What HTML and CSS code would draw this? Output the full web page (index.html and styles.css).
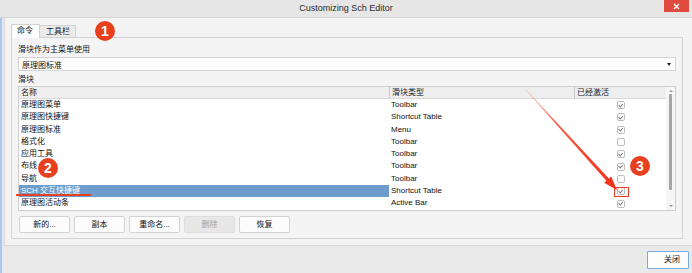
FILE: index.html
```html
<!DOCTYPE html>
<html lang="zh">
<head>
<meta charset="utf-8">
<title>Customizing Sch Editor</title>
<link rel="stylesheet" href="styles.css">
</head>
<body>
<div class="window">
  <div class="titlebar">
    <span></span>
    <span class="title">Customizing Sch Editor</span>
    <span class="close"><svg width="7" height="7" viewBox="0 0 7 7"><path d="M1 1L6 6M6 1L1 6" stroke="#fff" stroke-width="1.4"/></svg></span>
  </div>
  <div class="content">
    <div class="main">
      <div class="tabs">
        <div class="tab active">命令</div>
        <div class="tab">工具栏</div>
      </div>
      <div class="panel">
        <div class="label">滑块作为主菜单使用</div>
        <div class="select"><span>原理图标准</span><span class="arrow"></span></div>
        <div class="label label2">滑块</div>
        <div class="table">
          <div class="grid">
            <div class="th">名称</div><div class="th sep">滑块类型</div><div class="th sep">已经激活</div>

            <div class="td">原理图菜单</div><div class="td type">Toolbar</div><div class="td chk"><span class="cb on"></span></div>
            <div class="td">原理图快捷键</div><div class="td type">Shortcut Table</div><div class="td chk"><span class="cb on"></span></div>
            <div class="td">原理图标准</div><div class="td type">Menu</div><div class="td chk"><span class="cb on"></span></div>
            <div class="td">格式化</div><div class="td type">Toolbar</div><div class="td chk"><span class="cb"></span></div>
            <div class="td">应用工具</div><div class="td type">Toolbar</div><div class="td chk"><span class="cb on"></span></div>
            <div class="td">布线</div><div class="td type">Toolbar</div><div class="td chk"><span class="cb on"></span></div>
            <div class="td">导航</div><div class="td type">Toolbar</div><div class="td chk"><span class="cb"></span></div>
            <div class="td selected">SCH 交互快捷键</div><div class="td type">Shortcut Table</div><div class="td chk"><span class="cb on"></span></div>
            <div class="td">原理图活动条</div><div class="td type">Active Bar</div><div class="td chk"><span class="cb on"></span></div>
          </div>
          <div class="scrollbar">
            <span class="sb-up"></span>
            <span class="sb-thumb"></span>
            <span class="sb-down"></span>
          </div>
        </div>
        <div class="buttons">
          <button class="btn">新的...</button>
          <button class="btn">副本</button>
          <button class="btn">重命名...</button>
          <button class="btn disabled">删除</button>
          <button class="btn">恢复</button>
        </div>
      </div>
    </div>
    <div class="footer">
      <button class="btn close-btn">关闭</button>
    </div>
  </div>
</div>

<div class="annot underline u1"></div>
<div class="annot underline u2"></div>
<div class="annot redbox"></div>
<svg class="annot arrow-svg" width="692" height="273" viewBox="0 0 692 273">
  <defs>
    <linearGradient id="ag" x1="526" y1="90" x2="617" y2="190" gradientUnits="userSpaceOnUse">
      <stop offset="0" stop-color="#f4563a" stop-opacity="0.25"/>
      <stop offset="0.35" stop-color="#f23a1e" stop-opacity="0.85"/>
      <stop offset="1" stop-color="#f0301a"/>
    </linearGradient>
  </defs>
  <polygon fill="url(#ag)" points="525.8,90.2 526.2,89.8 608.9,178.5 611.2,176.4 617,190 604.1,182.8 606.4,180.7"/>
</svg>
<div class="annot badge b1">1</div>
<div class="annot badge b2">2</div>
<div class="annot badge b3">3</div>
</body>
</html>
```

FILE: styles.css
```css
* { box-sizing: border-box; }

body {
  margin: 0;
  width: 692px;
  height: 273px;
  overflow: hidden;
  position: relative;
  background: #e9e9e9;
  font-family: "Liberation Sans", "Noto Sans CJK SC", sans-serif;
  font-size: 8px;
  color: #111;
}

.titlebar {
  height: 18px;
  border-bottom: 1px solid #d6d6d6;
  background: #e6e6e6;
  display: grid;
  grid-template-columns: 1fr auto 1fr;
  align-items: start;
}
.title {
  font-size: 9px;
  line-height: 16px;
  color: #2b2b2b;
}
.close {
  justify-self: end;
  margin-right: 3px;
  width: 25px;
  height: 12px;
  background: #e14b3f;
  display: flex;
  align-items: center;
  justify-content: center;
}
.close svg { display: block; }

.content {
  border-left: 2px solid #a7c9ec;
}

.main {
  margin-left: 2px;
  border-left: 1px solid #d9d9d9;
  border-bottom: 1px solid #d6d6d6;
  background: #f3f3f3;
  padding: 6px 9px 6px 6px;
}

.tabs {
  display: flex;
  align-items: flex-end;
  margin-bottom: -1px;
  position: relative;
  z-index: 1;
}
.tab {
  height: 13px;
  padding: 0 5px;
  border: 1px solid #d2d2d2;
  background: #ebebeb;
  line-height: 11px;
  font-size: 8px;
}
.tab.active {
  height: 14px;
  border-bottom: none;
  background: #fdfdfd;
  line-height: 12px;
  padding: 0 6px 0 5px;
}
.tab + .tab { border-left: none; padding: 0 5px 0 6px; }

.panel {
  border: 1px solid #d3d3d3;
  background: #f4f4f4;
  padding: 6px 6px 5px 6px;
}

.label {
  line-height: 12px;
  height: 12px;
}
.label2 { margin-top: 3px; }

.select {
  margin-top: 1px;
  height: 14px;
  border: 1px solid #d4d4d4;
  background: #fdfdfd;
  display: flex;
  align-items: center;
  justify-content: space-between;
  padding: 0 4px 0 3px;
}
.arrow {
  width: 0;
  height: 0;
  border-left: 2.5px solid transparent;
  border-right: 2.5px solid transparent;
  border-top: 3px solid #222;
}

.table {
  border: 1px solid #cfcfcf;
  background: #fff;
  display: flex;
}
.grid {
  display: grid;
  grid-template-columns: 370px 185px 92px;
  grid-template-rows: 12px;
  grid-auto-rows: 12.3px;
}
.th {
  background: #eeeeee;
  border-bottom: 1px solid #d9d9d9;
  line-height: 11px;
  padding-left: 2px;
  color: #222;
}
.th.sep { border-left: 1px solid #c6c6c6; padding-left: 2px; }
.td {
  line-height: 12.3px;
  padding-left: 2px;
  white-space: nowrap;
}
.td.type { padding-left: 2px; }
.td.selected { background: #6e9dcd; color: #fff; }
.td.chk {
  display: flex;
  align-items: center;
  justify-content: center;
  padding-left: 1px;
}
.cb {
  display: block;
  width: 8px;
  height: 8px;
  border: 1px solid #bdbdbd;
  border-radius: 2px;
  background: #fff;
  position: relative;
}
.cb.on::after {
  content: "";
  position: absolute;
  left: 1.6px;
  top: 0.6px;
  width: 2px;
  height: 3.4px;
  border-right: 1px solid #7a7a7a;
  border-bottom: 1px solid #7a7a7a;
  transform: rotate(40deg);
}

.scrollbar {
  width: 9px;
  background: #f6f6f6;
  display: flex;
  flex-direction: column;
  align-items: center;
}
.sb-up, .sb-down {
  width: 0;
  height: 0;
  border-left: 2px solid transparent;
  border-right: 2px solid transparent;
}
.sb-up { margin-top: 3px; border-bottom: 2px solid #9a9a9a; }
.sb-down { margin-top: auto; margin-bottom: 3px; border-top: 2px solid #9a9a9a; }
.sb-thumb {
  margin-top: 2px;
  width: 3px;
  height: 96px;
  background: #a6a6a6;
  border-radius: 1px;
}

.buttons {
  margin-top: 5px;
  display: flex;
  gap: 4px;
  padding-left: 1px;
}
.btn {
  width: 51px;
  height: 17px;
  border: 1px solid #d3d3d3;
  border-radius: 2px;
  background: #fcfcfc;
  font-family: inherit;
  font-size: 8px;
  color: #111;
  padding: 0;
  line-height: 15px;
}
.btn.disabled {
  background: #e7e7e7;
  border-color: #dedede;
  color: #a3a3a3;
}

.footer {
  height: 28px;
  display: flex;
  justify-content: flex-end;
  align-items: flex-start;
  padding: 5px 3px 0 0;
}
.close-btn {
  width: 42px;
  height: 18px;
  border: 1px solid #78aadf;
  border-radius: 1px;
  background: #fdfdfd;
  padding-left: 8px;
}

/* annotations overlay */
.annot { position: absolute; }
.arrow-svg { left: 0; top: 0; pointer-events: none; }
.underline {
  height: 2px;
  background: #e8401f;
}
.u1 { left: 39px; top: 35px; width: 36px; }
.u2 { left: 16px; top: 194px; width: 75px; }
.redbox {
  left: 614px;
  top: 187px;
  width: 15px;
  height: 10px;
  border: 1.5px solid #f0381e;
}
.badge {
  width: 20px;
  height: 20px;
  border-radius: 50%;
  background: #e8401f;
  color: #fff;
  font-family: "Liberation Sans", sans-serif;
  font-weight: bold;
  font-size: 14px;
  line-height: 20px;
  text-align: center;
}
.b1 { left: 95px; top: 21px; }
.b2 { left: 38px; top: 158px; }
.b3 { left: 630px; top: 156px; }
```
